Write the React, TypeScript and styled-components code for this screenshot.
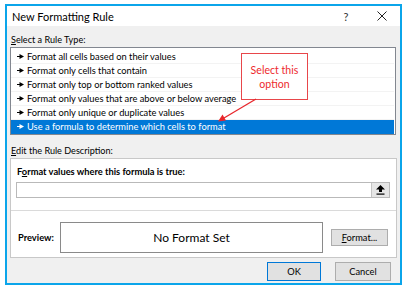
import React from "react";
import styled, { createGlobalStyle } from "styled-components";

const GlobalStyle = createGlobalStyle`
  html, body {
    margin: 0;
    padding: 0;
    background: #ffffff;
  }
  body {
    font-family: Lato, "Liberation Sans", sans-serif;
    font-size: 9.3px;
    color: #000;
  }
`;

const Page = styled.div`
  position: relative;
  padding: 4px 0 0 5px;
  width: 408px;
  height: 291px;
  box-sizing: border-box;
`;

const Dialog = styled.div`
  width: 397px;
  box-sizing: border-box;
  border: 2px solid #0ba5ea;
  background: #f0f0f0;
  display: flex;
  flex-direction: column;
`;

const TitleBar = styled.div`
  height: 20px;
  background: #ffffff;
  display: flex;
  align-items: center;
  padding-left: 5px;
  font-size: 11px;
`;

const TitleText = styled.div`
  flex: 1;
`;

const TitleButton = styled.div`
  width: 36px;
  display: flex;
  justify-content: center;
  align-items: center;
  font-size: 11px;
  color: #333;
`;

const Body = styled.div`
  padding: 0 5px 2px 3px;
  display: flex;
  flex-direction: column;
`;

const SectionLabel = styled.div<{ $top: number }>`
  margin-top: ${(p) => p.$top}px;
  height: 14px;
  line-height: 14px;
  padding-left: 1px;
  font-size: 9.1px;
`;

const RuleList = styled.div`
  width: 386px;
  box-sizing: border-box;
  border: 1px solid #828790;
  background: #fff;
  padding: 2px 1px 0 0;
  display: flex;
  flex-direction: column;
`;

const RuleRow = styled.div<{ $selected?: boolean }>`
  height: 14px;
  display: flex;
  align-items: center;
  gap: 3px;
  padding-left: 6px;
  box-sizing: border-box;
  white-space: nowrap;
  background: ${(p) => (p.$selected ? "#0078d7" : "transparent")};
  color: ${(p) => (p.$selected ? "#fff" : "#000")};
  border-bottom: 1px solid ${(p) => (p.$selected ? "#0078d7" : "#f3f3f3")};
`;

const DescGroup = styled.div`
  width: 387px;
  box-sizing: border-box;
  border: 1px solid #c8c8c8;
  background: #fff;
  display: flex;
  flex-direction: column;
`;

const FormulaSection = styled.div`
  padding: 6px 6px 12px 5px;
  border-bottom: 1px solid #dadada;
`;

const BoldLabel = styled.div`
  font-weight: 700;
  height: 14px;
  line-height: 14px;
  padding-left: 1px;
`;

const FormulaInput = styled.div`
  margin-top: 3px;
  height: 16px;
  box-sizing: border-box;
  border: 1px solid #b9b9b9;
  display: flex;
  justify-content: flex-end;
  align-items: stretch;
`;

const RefButton = styled.div`
  width: 17px;
  background: #e6e6e6;
  border-left: 1px solid #c4c4c4;
  display: flex;
  justify-content: center;
  align-items: center;
`;

const PreviewSection = styled.div`
  padding: 11px 8px 4px 6px;
  display: flex;
  align-items: center;
`;

const PreviewLabel = styled(BoldLabel)`
  width: 42px;
  flex-shrink: 0;
`;

const PreviewBox = styled.div`
  width: 263px;
  height: 31px;
  box-sizing: border-box;
  border: 1px solid #8a8a8a;
  display: flex;
  justify-content: center;
  align-items: center;
  font-size: 12px;
`;

const Button = styled.div<{ $default?: boolean; $w: number; $h: number }>`
  width: ${(p) => p.$w}px;
  height: ${(p) => p.$h}px;
  box-sizing: border-box;
  border: 1px solid ${(p) => (p.$default ? "#0078d7" : "#adadad")};
  background: #e1e1e1;
  display: flex;
  justify-content: center;
  align-items: center;
`;

const FormatButton = styled(Button)`
  margin-left: 8px;
`;

const ButtonRow = styled.div`
  margin-top: 4px;
  display: flex;
  justify-content: flex-end;
  gap: 14px;
  padding-right: 4px;
`;

const Callout = styled.div`
  position: absolute;
  left: 241px;
  top: 53px;
  width: 67px;
  height: 47px;
  box-sizing: border-box;
  border: 1px solid #e8464a;
  background: #fff;
  color: #ee2a2e;
  font-size: 10.6px;
  line-height: 14px;
  text-align: center;
  display: flex;
  flex-direction: column;
  justify-content: center;
`;

const CalloutArrow = styled.svg`
  position: absolute;
  left: 0;
  top: 0;
  pointer-events: none;
`;

const Bullet = ({ color }: { color: string }) => (
  <svg width="7" height="5" viewBox="0 0 7 5">
    <rect x="0" y="2" width="3" height="1" fill={color} />
    <polygon points="2.5,0 7,2.5 2.5,5" fill={color} />
  </svg>
);

const rules = [
  "Format all cells based on their values",
  "Format only cells that contain",
  "Format only top or bottom ranked values",
  "Format only values that are above or below average",
  "Format only unique or duplicate values",
  "Use a formula to determine which cells to format",
];

export default function App() {
  return (
    <Page>
      <GlobalStyle />
      <Dialog>
        <TitleBar>
          <TitleText>New Formatting Rule</TitleText>
          <TitleButton>?</TitleButton>
          <TitleButton>
            <svg width="10" height="10" viewBox="0 0 10 10">
              <path d="M0.5 0.5 L9.5 9.5 M9.5 0.5 L0.5 9.5" stroke="#222" strokeWidth="1" />
            </svg>
          </TitleButton>
        </TitleBar>
        <Body>
          <SectionLabel $top={7}>
            <u>S</u>elect a Rule Type:
          </SectionLabel>
          <RuleList>
            {rules.map((r, i) => {
              const selected = i === rules.length - 1;
              return (
                <RuleRow key={r} $selected={selected}>
                  <Bullet color={selected ? "#fff" : "#000"} />
                  {r}
                </RuleRow>
              );
            })}
          </RuleList>
          <SectionLabel $top={9}>
            <u>E</u>dit the Rule Description:
          </SectionLabel>
          <DescGroup>
            <FormulaSection>
              <BoldLabel>
                F<u>o</u>rmat values where this formula is true:
              </BoldLabel>
              <FormulaInput>
                <RefButton>
                  <svg width="9" height="10" viewBox="0 0 9 10">
                    <polygon points="4.5,0 9,4.5 6,4.5 6,7 3,7 3,4.5 0,4.5" fill="#000" />
                    <rect x="0.5" y="8.5" width="8" height="1.2" fill="#000" />
                  </svg>
                </RefButton>
              </FormulaInput>
            </FormulaSection>
            <PreviewSection>
              <PreviewLabel>Preview:</PreviewLabel>
              <PreviewBox>No Format Set</PreviewBox>
              <FormatButton $w={57} $h={17}>
                <span>
                  <u>F</u>ormat...
                </span>
              </FormatButton>
            </PreviewSection>
          </DescGroup>
          <ButtonRow>
            <Button $default $w={54} $h={19}>
              OK
            </Button>
            <Button $w={56} $h={19}>
              Cancel
            </Button>
          </ButtonRow>
        </Body>
      </Dialog>
      <Callout>
        <span>Select this</span>
        <span>option</span>
      </Callout>
      <CalloutArrow width="408" height="291" viewBox="0 0 408 291">
        <line x1="256" y1="99" x2="224" y2="118" stroke="#e8262b" strokeWidth="1.3" />
        <polygon points="218,121.5 222.5,114.5 226,120.5" fill="#e8262b" />
      </CalloutArrow>
    </Page>
  );
}
